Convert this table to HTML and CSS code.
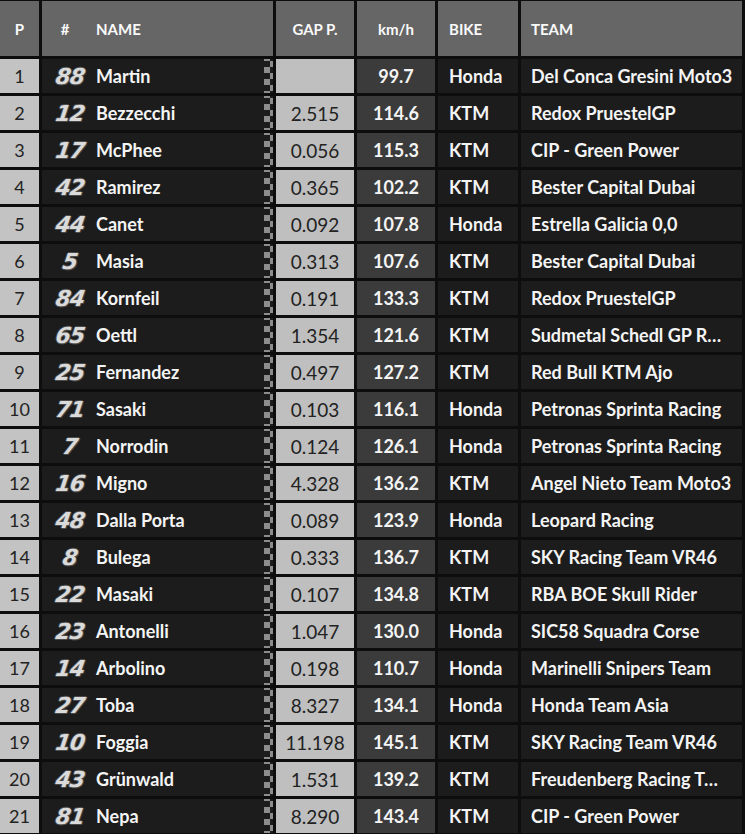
FILE: index.html
```html
<!DOCTYPE html>
<html lang="en">
<head>
<meta charset="utf-8">
<title>Classification</title>
<link rel="stylesheet" href="styles.css">
</head>
<body>
<div class="board">
  <div class="row head">
    <div class="c pos">P</div>
    <div class="c rider"><span class="num">#</span><span class="name">NAME</span></div>
    <div class="c gap">GAP P.</div>
    <div class="c spd">km/h</div>
    <div class="c bike">BIKE</div>
    <div class="c team">TEAM</div>
  </div>

  <div class="row"><div class="c pos">1</div><div class="c rider"><span class="num">88</span><span class="name">Martin</span><span class="flag"></span></div><div class="c gap"></div><div class="c spd">99.7</div><div class="c bike">Honda</div><div class="c team">Del Conca Gresini Moto3</div></div>
  <div class="row"><div class="c pos">2</div><div class="c rider"><span class="num">12</span><span class="name">Bezzecchi</span><span class="flag"></span></div><div class="c gap">2.515</div><div class="c spd">114.6</div><div class="c bike">KTM</div><div class="c team">Redox PruestelGP</div></div>
  <div class="row"><div class="c pos">3</div><div class="c rider"><span class="num">17</span><span class="name">McPhee</span><span class="flag"></span></div><div class="c gap">0.056</div><div class="c spd">115.3</div><div class="c bike">KTM</div><div class="c team">CIP - Green Power</div></div>
  <div class="row"><div class="c pos">4</div><div class="c rider"><span class="num">42</span><span class="name">Ramirez</span><span class="flag"></span></div><div class="c gap">0.365</div><div class="c spd">102.2</div><div class="c bike">KTM</div><div class="c team">Bester Capital Dubai</div></div>
  <div class="row"><div class="c pos">5</div><div class="c rider"><span class="num">44</span><span class="name">Canet</span><span class="flag"></span></div><div class="c gap">0.092</div><div class="c spd">107.8</div><div class="c bike">Honda</div><div class="c team">Estrella Galicia 0,0</div></div>
  <div class="row"><div class="c pos">6</div><div class="c rider"><span class="num">5</span><span class="name">Masia</span><span class="flag"></span></div><div class="c gap">0.313</div><div class="c spd">107.6</div><div class="c bike">KTM</div><div class="c team">Bester Capital Dubai</div></div>
  <div class="row"><div class="c pos">7</div><div class="c rider"><span class="num">84</span><span class="name">Kornfeil</span><span class="flag"></span></div><div class="c gap">0.191</div><div class="c spd">133.3</div><div class="c bike">KTM</div><div class="c team">Redox PruestelGP</div></div>
  <div class="row"><div class="c pos">8</div><div class="c rider"><span class="num">65</span><span class="name">Oettl</span><span class="flag"></span></div><div class="c gap">1.354</div><div class="c spd">121.6</div><div class="c bike">KTM</div><div class="c team">Sudmetal Schedl GP R…</div></div>
  <div class="row"><div class="c pos">9</div><div class="c rider"><span class="num">25</span><span class="name">Fernandez</span><span class="flag"></span></div><div class="c gap">0.497</div><div class="c spd">127.2</div><div class="c bike">KTM</div><div class="c team">Red Bull KTM Ajo</div></div>
  <div class="row"><div class="c pos">10</div><div class="c rider"><span class="num">71</span><span class="name">Sasaki</span><span class="flag"></span></div><div class="c gap">0.103</div><div class="c spd">116.1</div><div class="c bike">Honda</div><div class="c team">Petronas Sprinta Racing</div></div>
  <div class="row"><div class="c pos">11</div><div class="c rider"><span class="num">7</span><span class="name">Norrodin</span><span class="flag"></span></div><div class="c gap">0.124</div><div class="c spd">126.1</div><div class="c bike">Honda</div><div class="c team">Petronas Sprinta Racing</div></div>
  <div class="row"><div class="c pos">12</div><div class="c rider"><span class="num">16</span><span class="name">Migno</span><span class="flag"></span></div><div class="c gap">4.328</div><div class="c spd">136.2</div><div class="c bike">KTM</div><div class="c team">Angel Nieto Team Moto3</div></div>
  <div class="row"><div class="c pos">13</div><div class="c rider"><span class="num">48</span><span class="name">Dalla Porta</span><span class="flag"></span></div><div class="c gap">0.089</div><div class="c spd">123.9</div><div class="c bike">Honda</div><div class="c team">Leopard Racing</div></div>
  <div class="row"><div class="c pos">14</div><div class="c rider"><span class="num">8</span><span class="name">Bulega</span><span class="flag"></span></div><div class="c gap">0.333</div><div class="c spd">136.7</div><div class="c bike">KTM</div><div class="c team">SKY Racing Team VR46</div></div>
  <div class="row"><div class="c pos">15</div><div class="c rider"><span class="num">22</span><span class="name">Masaki</span><span class="flag"></span></div><div class="c gap">0.107</div><div class="c spd">134.8</div><div class="c bike">KTM</div><div class="c team">RBA BOE Skull Rider</div></div>
  <div class="row"><div class="c pos">16</div><div class="c rider"><span class="num">23</span><span class="name">Antonelli</span><span class="flag"></span></div><div class="c gap">1.047</div><div class="c spd">130.0</div><div class="c bike">Honda</div><div class="c team">SIC58 Squadra Corse</div></div>
  <div class="row"><div class="c pos">17</div><div class="c rider"><span class="num">14</span><span class="name">Arbolino</span><span class="flag"></span></div><div class="c gap">0.198</div><div class="c spd">110.7</div><div class="c bike">Honda</div><div class="c team">Marinelli Snipers Team</div></div>
  <div class="row"><div class="c pos">18</div><div class="c rider"><span class="num">27</span><span class="name">Toba</span><span class="flag"></span></div><div class="c gap">8.327</div><div class="c spd">134.1</div><div class="c bike">Honda</div><div class="c team">Honda Team Asia</div></div>
  <div class="row"><div class="c pos">19</div><div class="c rider"><span class="num">10</span><span class="name">Foggia</span><span class="flag"></span></div><div class="c gap">11.198</div><div class="c spd">145.1</div><div class="c bike">KTM</div><div class="c team">SKY Racing Team VR46</div></div>
  <div class="row"><div class="c pos">20</div><div class="c rider"><span class="num">43</span><span class="name">Grünwald</span><span class="flag"></span></div><div class="c gap">1.531</div><div class="c spd">139.2</div><div class="c bike">KTM</div><div class="c team">Freudenberg Racing T…</div></div>
  <div class="row"><div class="c pos">21</div><div class="c rider"><span class="num">81</span><span class="name">Nepa</span><span class="flag"></span></div><div class="c gap">8.290</div><div class="c spd">143.4</div><div class="c bike">KTM</div><div class="c team">CIP - Green Power</div></div>
</div>
</body>
</html>
```

FILE: styles.css
```css
html, body {
  margin: 0;
  padding: 0;
  background: #0d0d0d;
}

.board {
  display: grid;
  grid-template-columns: 39px 231px 78px 78px 80px 221px;
  grid-auto-rows: 34px;
  grid-template-rows: 55px;
  gap: 3px;
  padding: 1px 3px 0 0;
  background: #0d0d0d;
  width: 745px;
  height: 834px;
  box-sizing: border-box;
  font-family: Lato, "Liberation Sans", sans-serif;
  font-weight: 700;
  font-size: 18px;
  color: #f4f4f4;
}

.row {
  display: contents;
}

.c {
  display: flex;
  align-items: center;
  white-space: nowrap;
  overflow: hidden;
  min-width: 0;
}

.pos {
  justify-content: center;
  background: #c3c3c3;
  color: #222;
  font-weight: 400;
  font-size: 18px;
}

.rider {
  background: #1c1c1c;
  padding-left: 10px;
}

.num {
  width: 36px;
  flex: none;
  text-align: center;
  font-family: "DejaVu Sans", sans-serif;
  font-style: italic;
  font-weight: 700;
  font-size: 22px;
  letter-spacing: -1px;
  color: #dadada;
  transform: skewX(-8deg);
  text-shadow: 1px 0 0 #4a4a4a, -1px 0 0 #4a4a4a, 0 1px 0 #4a4a4a, 0 -1px 0 #4a4a4a, 1px 1px 0 #4a4a4a;
}

.name {
  margin-left: 8px;
}

.flag {
  margin-left: auto;
  align-self: stretch;
  width: 9px;
  flex: none;
  background: conic-gradient(#8d8d8d 0 25%, transparent 0 50%, #8d8d8d 0 75%, transparent 0) 0 2px / 12px 12px;
}

.gap {
  justify-content: center;
  background: #bfbfbf;
  color: #222;
  font-weight: 400;
  font-size: 19px;
}

.spd {
  justify-content: center;
  background: #3b3b3b;
}

.bike {
  background: #1c1c1c;
  padding-left: 11px;
}

.team {
  background: #1c1c1c;
  padding-left: 10px;
}

.head .c {
  background: #666;
  color: #fafafa;
  font-size: 15px;
  font-weight: 700;
}

.head .pos {
  color: #fafafa;
}

.head .num {
  font-family: Lato, "Liberation Sans", sans-serif;
  font-style: normal;
  font-size: 15px;
  color: #fafafa;
  text-shadow: none;
  letter-spacing: 0;
  transform: none;
  width: 26px;
}

.head .name {
  margin-left: 18px;
}
```
